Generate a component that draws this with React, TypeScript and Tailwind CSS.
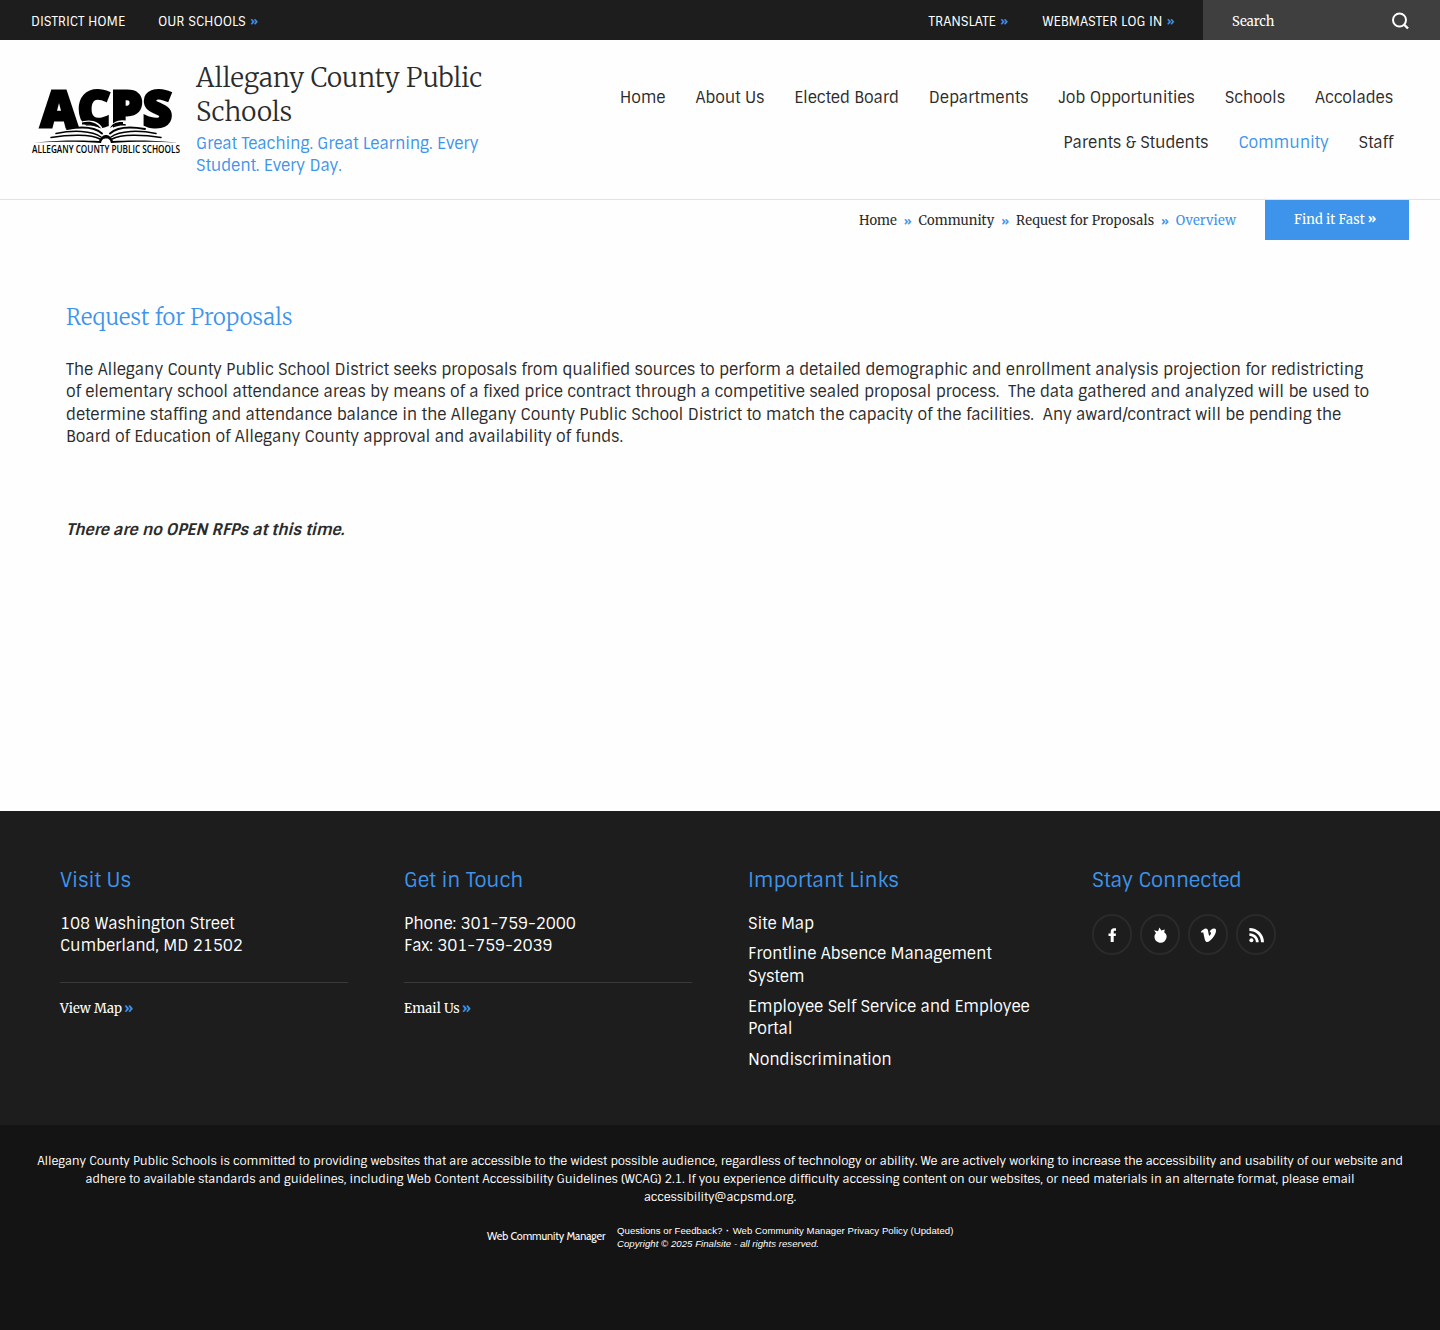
import type { ReactNode } from "react";

interface NavItem {
  label: string;
  active?: boolean;
}

const NAV_ROWS: NavItem[][] = [
  [
    { label: "Home" },
    { label: "About Us" },
    { label: "Elected Board" },
    { label: "Departments" },
    { label: "Job Opportunities" },
    { label: "Schools" },
    { label: "Accolades" },
  ],
  [
    { label: "Parents & Students" },
    { label: "Community", active: true },
    { label: "Staff" },
  ],
];

const CRUMBS = ["Home", "Community", "Request for Proposals"];

export default function App() {
  return (
    <div className="flex h-[1330px] w-[1440px] flex-col bg-[#fefefe] font-['Sintony','Roboto',sans-serif] text-base leading-[22.4px] tracking-[-0.152px] text-[#2b2b2b]">
      <TopBar />
      <Header />
      <Breadcrumbs />
      <main className="flex-1 px-[66px] pt-[60px]">
        <h1 className="font-['Merriweather','DejaVu_Serif_Condensed',serif] text-[22px] font-light leading-[34px] tracking-[0.07px] text-[#3d94ea]">
          Request for Proposals
        </h1>
        <p className="mt-[25px] whitespace-nowrap">
          The Allegany County Public School District seeks proposals from qualified sources to perform a detailed demographic and enrollment analysis projection for redistricting
          <br />
          of elementary school attendance areas by means of a fixed price contract through a competitive sealed proposal process.&nbsp; The data gathered and analyzed will be used to
          <br />
          determine staffing and attendance balance in the Allegany County Public School District to match the capacity of the facilities.&nbsp; Any award/contract will be pending the
          <br />
          Board of Education of Allegany County approval and availability of funds.
        </p>
        <p className="mt-[70px] font-bold italic">There are no OPEN RFPs at this time.</p>
      </main>
      <Footer />
      <Legal />
    </div>
  );
}

function TopBar() {
  return (
    <div className="flex h-10 shrink-0 bg-[#1d1d1d] text-[13px] leading-[43px] tracking-[-0.1px] text-white">
      <span className="ml-[31px]">DISTRICT HOME</span>
      <span className="ml-[33px]">
        OUR SCHOOLS <Raquo />
      </span>
      <span className="ml-auto">
        TRANSLATE <Raquo />
      </span>
      <span className="ml-[34.5px] mr-[28.5px]">
        WEBMASTER LOG IN <Raquo />
      </span>
      <div className="flex w-[237px] justify-between bg-[#3f3f3f] pl-[29px] pr-[31px] font-['Merriweather','DejaVu_Serif_Condensed',serif] tracking-[0.05px]">
        <span>Search</span>
        <svg className="mt-3 h-[18px] w-[18px]" viewBox="0 0 18 18" fill="none" stroke="#fff" strokeWidth="2">
          <circle cx="8.500" cy="8" r="6.5" />
          <path d="M13 12.500 17 16.500" strokeWidth="2.4" />
        </svg>
      </div>
    </div>
  );
}

function Raquo() {
  return <span className="ml-px text-sm font-bold leading-none text-[#3d94ea]">»</span>;
}

function Header() {
  return (
    <header className="flex h-40 shrink-0 border-b border-[#e3e3e3]">
      <Logo />
      <div className="ml-[15px] w-[310px] pt-[21px]">
        <div className="font-['Merriweather','DejaVu_Serif_Condensed',serif] text-[26px] font-light leading-[34px] tracking-[0.07px]">
          Allegany County Public Schools
        </div>
        <div className="mt-1 text-[#3d94ea]">
          Great Teaching. Great Learning. Every
          <br />
          Student. Every Day.
        </div>
      </div>
      <nav className="ml-auto mr-[47px] pt-9">
        {NAV_ROWS.map((row, i) => (
          <div key={i} className="flex h-[45px] items-center justify-end gap-[30px]">
            {row.map((item) => (
              <span key={item.label} className={item.active ? "text-[#3d94ea]" : ""}>
                {item.label}
              </span>
            ))}
          </div>
        ))}
      </nav>
    </header>
  );
}

function Logo() {
  return (
    <svg className="ml-[31px] mt-[45px] h-[72px] w-[150px] shrink-0 overflow-visible" viewBox="0 0 150 72">
      <g fontFamily="'Open Sans', sans-serif" fontWeight="800" fontSize="50" letterSpacing="0" stroke="#000" strokeWidth="2.8">
        <text x="9.5" y="42" textLength="131.5" lengthAdjust="spacingAndGlyphs">
          ACPS
        </text>
      </g>
      {/* open book, white halo cuts into the letters */}
      <path d="M40 44.500C54 39 66 38 75 48C84 38 96 39 110 44.500L146 58H4Z" fill="#fefefe" />
      <path d="M48 37.500C58 33 69 36 72 44C62 39 56 38.500 48 40ZM98 36.500C90 33.500 81 36 78 44C84 39 90 38.500 98 39.500Z" fill="#fefefe" />
      <path d="M51 37.500C59 35.500 66 37.500 70 43.500C63 40 58 39.500 51 39.500ZM92 37C86 36.500 81 38.500 79 43C83 40 87 39.500 92 39.500Z" />
      <g fill="none" stroke="#000" strokeWidth="1.5" strokeLinecap="round">
        <path d="M36 44C50 41.500 64 42 71 48.500M114 44C100 41.500 86 42 79 48.500" strokeWidth="1.9" />
        <path d="M25 48.500C42 45 61 45.500 70 52M125 48.500C108 45 89 45.500 80 52" />
        <path d="M20 52.500C38 49.500 60 49 69 54M130 52.500C112 49.500 90 49 81 54" />
      </g>
      <path d="M3 57.500C28 55 52 55 68 56C70 51 73 50 75 50S80 51 82 56C98 55 122 55 147 57.500C122 56.500 100 56.500 80 58C79 54 77 53.500 75 53.500S71 54 70 58C50 56.500 28 56.500 3 57.500Z" />
      <text
        x="1"
        y="68"
        fontFamily="'Open Sans', sans-serif"
        fontWeight="600"
        fontSize="10"
        letterSpacing="0"
        textLength="148"
        lengthAdjust="spacingAndGlyphs"
      >
        ALLEGANY COUNTY PUBLIC SCHOOLS
      </text>
    </svg>
  );
}

function Breadcrumbs() {
  return (
    <div className="flex h-10 shrink-0 justify-end pr-[31px] font-['Merriweather','DejaVu_Serif_Condensed',serif] text-[13px] leading-[42px] tracking-[0.11px]">
      {CRUMBS.map((crumb) => (
        <span key={crumb} className="flex">
          {crumb}
          <span className="mx-[7px] font-['Sintony','Roboto',sans-serif] text-sm font-bold leading-[42px] text-[#3d94ea]">»</span>
        </span>
      ))}
      <span className="text-[#3d94ea]">Overview</span>
      <span className="ml-[29px] w-36 bg-[#3d94ea] pl-[29px] leading-10 text-white">
        Find it Fast{" "}
        <span className="font-['Sintony','Roboto',sans-serif] text-[15px] font-bold leading-none">»</span>
      </span>
    </div>
  );
}

function Footer() {
  return (
    <footer className="grid h-[314px] shrink-0 grid-cols-[344px_344px_344px_1fr] bg-[#1d1d1d] pl-[60px] pt-[54px] text-white">
      <FooterColumn title="Visit Us">
        <p>
          108 Washington Street
          <br />
          Cumberland, MD 21502
        </p>
        <FooterAction label="View Map" />
      </FooterColumn>
      <FooterColumn title="Get in Touch">
        <p>
          Phone: 301-759-2000
          <br />
          Fax: 301-759-2039
        </p>
        <FooterAction label="Email Us" />
      </FooterColumn>
      <FooterColumn title="Important Links">
        <ul className="flex w-[300px] flex-col gap-2">
          <li>Site Map</li>
          <li>
            Frontline Absence Management
            <br />
            System
          </li>
          <li>
            Employee Self Service and Employee
            <br />
            Portal
          </li>
          <li>Nondiscrimination</li>
        </ul>
      </FooterColumn>
      <FooterColumn title="Stay Connected">
        <div className="flex gap-2 pt-[1.4px]">
          <SocialLink>
            <path d="M6.700 15V8.900H4.500V6.400H6.700V4.700C6.700 2.400 8 1.200 10 1.200H12V3.700H10.700C9.900 3.700 9.700 4.100 9.700 4.800V6.400H12L11.700 8.900H9.700V15Z" />
          </SocialLink>
          <SocialLink>
            <path d="M2 3.200 6 4.300 7.500.500 9.300 3.600 12.800 2.600 12.200 5.300C14.200 6.700 15 8.600 14.500 10.800 13.700 13.800 11.500 15.800 8.700 15.800 5.500 15.800 2.800 13.500 2.500 10.300 2.300 8.600 3 7.200 4 6.100Z" />
          </SocialLink>
          <SocialLink>
            <path d="M1 4.500C2.800 2.900 4.400 1.700 5.600 1.600C7.200 1.500 7.900 2.600 8.200 4.600C8.600 7 8.900 8.800 9.400 8.800C9.800 8.800 11 6.900 11.100 6C11.200 5 10.400 5 9.600 5.300C10.500 2.300 12.300 1.300 14.200 1.400C15.700 1.500 16.200 2.600 16 4.300C15.700 7.800 10.400 15 7.200 15C5.200 15 4.700 11.900 4 8.900C3.600 7 3.400 5.300 2.800 5.300L1.700 5.900Z" />
          </SocialLink>
          <SocialLink>
            <circle cx="3.400" cy="13.200" r="2" />
            <path d="M1.400 6.300V9C5 9 7.900 11.500 7.900 15.200H10.700C10.700 10.200 6.500 6.300 1.400 6.300Z" />
            <path d="M1.400 1V3.900C8 3.900 13 8.700 13 15.200H16C16 7.200 9.500 1 1.400 1Z" />
          </SocialLink>
        </div>
      </FooterColumn>
    </footer>
  );
}

function FooterColumn({ title, children }: { title: string; children: ReactNode }) {
  return (
    <div>
      <h2 className="mb-[17.8px] text-[20px] leading-[30px] text-[#3d94ea]">{title}</h2>
      {children}
    </div>
  );
}

function FooterAction({ label }: { label: string }) {
  return (
    <div className="mt-6 flex w-72 border-t border-[#3a3a3a] pt-[15px] font-['Merriweather','DejaVu_Serif_Condensed',serif] text-[13px] tracking-[0.07px]">
      {label}
      <span className="ml-[2.5px] font-['Sintony','Roboto',sans-serif] text-base font-bold leading-[22px] text-[#3d94ea]">»</span>
    </div>
  );
}

function SocialLink({ children }: { children: ReactNode }) {
  return (
    <span className="flex h-[41px] w-10 items-center justify-center rounded-full border-2 border-[#2a2a2a] pt-px">
      <svg className="h-4 w-[17px]" viewBox="0 0 17 16" fill="#fff">
        {children}
      </svg>
    </span>
  );
}

function Legal() {
  return (
    <div className="h-[205px] shrink-0 bg-[#141414] pt-[27px] text-center text-white">
      <p className="whitespace-nowrap text-xs leading-[18px]">
        Allegany County Public Schools is committed to providing websites that are accessible to the widest possible audience, regardless of technology or ability. We are actively working to increase the accessibility and usability of our website and
        <br />
        adhere to available standards and guidelines, including Web Content Accessibility Guidelines (WCAG) 2.1. If you experience difficulty accessing content on our websites, or need materials in an alternate format, please email
        <br />
        accessibility@acpsmd.org.
      </p>
      <div className="mt-[18px] flex items-center pl-[487px] text-left">
        <span className="w-[130px] whitespace-nowrap font-['Cabin','Lato',sans-serif] text-[10.8px] tracking-[-0.08px]">
          Web Community Manager
        </span>
        <div className="whitespace-nowrap font-['Liberation_Sans',sans-serif] text-[9.6px] leading-[13px] tracking-[0.04px]">
          <div>
            Questions or Feedback?
            <span className="mx-[3.5px] font-bold">·</span>
            Web Community Manager Privacy Policy (Updated)
          </div>
          <div className="italic">Copyright © 2025 Finalsite - all rights reserved.</div>
        </div>
      </div>
    </div>
  );
}
